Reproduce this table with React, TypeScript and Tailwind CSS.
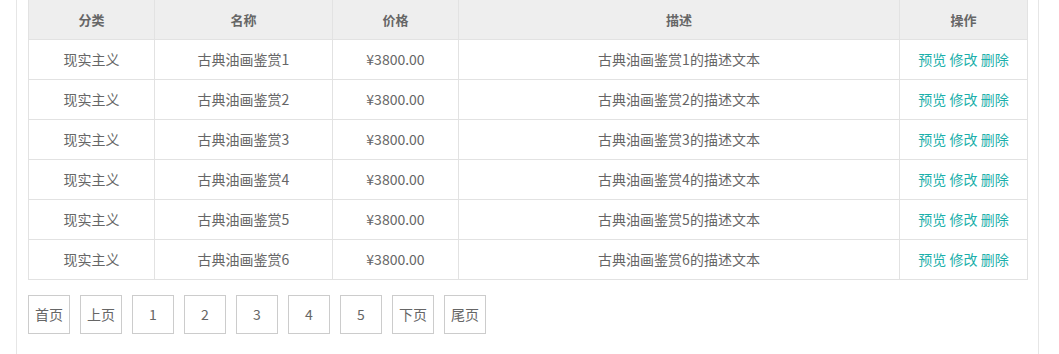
import React from "react";

const rows = [1, 2, 3, 4, 5, 6].map((n) => ({
  category: "现实主义",
  name: `古典油画鉴赏${n}`,
  price: "¥3800.00",
  desc: `古典油画鉴赏${n}的描述文本`,
}));

const pages = ["首页", "上页", "1", "2", "3", "4", "5", "下页", "尾页"];

export default function App() {
  return (
    <div
      className="w-[1059px] h-[354px] overflow-hidden bg-white pl-4 text-[14px] text-[#666]"
      style={{ fontFamily: '"Noto Sans CJK SC", "Noto Sans", sans-serif' }}
    >
      <div className="w-[1023px] h-full border-x border-[#e6e6e6] px-[11px]">
        <table className="w-[999px] border-collapse table-fixed">
          <colgroup>
            <col className="w-[126px]" />
            <col className="w-[178px]" />
            <col className="w-[126px]" />
            <col className="w-[441px]" />
            <col className="w-[128px]" />
          </colgroup>
          <thead>
            <tr className="bg-[#eee] h-[39px]">
              {["分类", "名称", "价格", "描述", "操作"].map((h) => (
                <th key={h} className="border border-[#e2e2e2] border-t-0 font-bold text-center text-[13px] p-0">
                  {h}
                </th>
              ))}
            </tr>
          </thead>
          <tbody>
            {rows.map((r) => (
              <tr key={r.name} className="h-10">
                <td className="border border-[#e2e2e2] text-center p-0">{r.category}</td>
                <td className="border border-[#e2e2e2] text-center p-0">{r.name}</td>
                <td className="border border-[#e2e2e2] text-center p-0">{r.price}</td>
                <td className="border border-[#e2e2e2] text-center p-0">{r.desc}</td>
                <td className="border border-[#e2e2e2] text-center p-0 text-[#1cb0ab]">
                  <span>预览</span> <span>修改</span> <span>删除</span>
                </td>
              </tr>
            ))}
          </tbody>
        </table>
        <div className="flex gap-[10px] mt-[15px]">
          {pages.map((p) => (
            <button
              key={p}
              className="w-[42px] h-[39px] border border-[#ccc] bg-white flex items-center justify-center text-[14px] text-[#666]"
            >
              {p}
            </button>
          ))}
        </div>
      </div>
    </div>
  );
}
